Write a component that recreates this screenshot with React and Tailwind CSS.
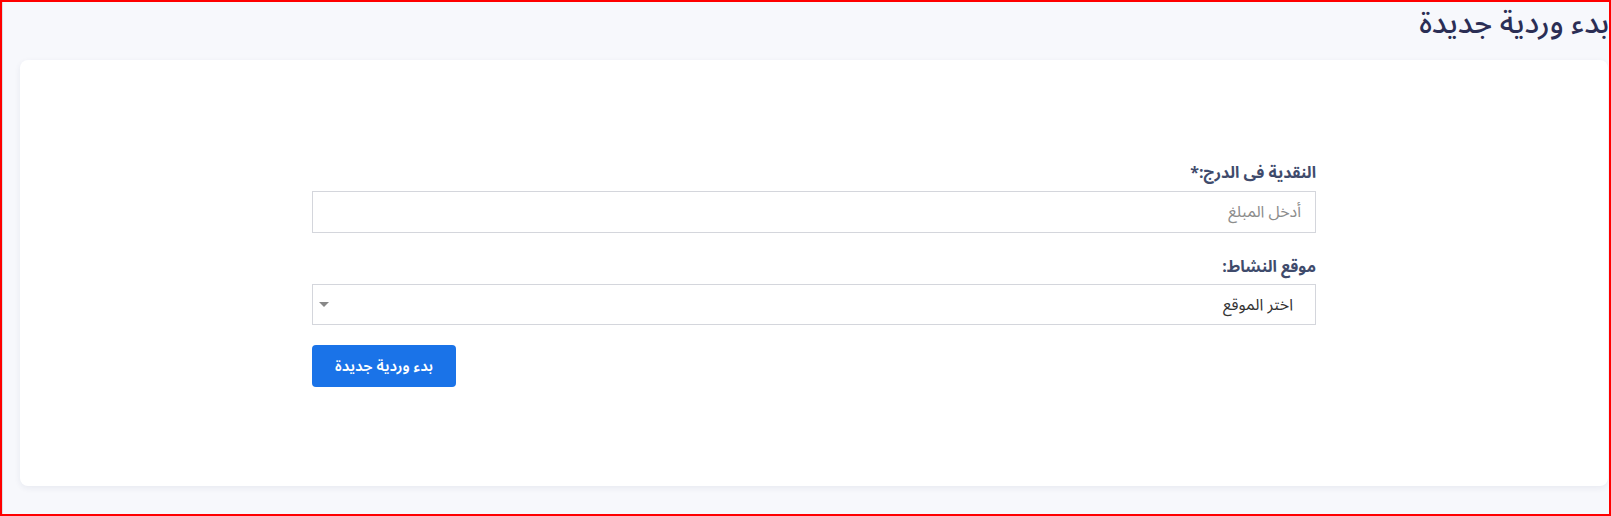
import React from 'react';

function App() {
  return (
    <div
      dir="rtl"
      className="h-[516px] w-[1611px] border-2 border-[#ff0000] bg-[#f7f8fc] overflow-hidden"
      style={{ fontFamily: '"Noto Sans Arabic", "Noto Sans Arabic UI", "Noto Sans", sans-serif' }}
    >
      <div className="h-full border-l border-[#dcdee6] pl-[17px] pr-0">
        {/* Page title */}
        <h1 className="h-[58px] pt-[2px] text-[30px] leading-[40px] font-medium text-[#2b2e55] whitespace-nowrap">
          بدء وردية جديدة
        </h1>

        {/* Card */}
        <div className="h-[426px] mr-[1px] rounded-lg bg-white shadow-[0_2px_6px_rgba(30,40,90,0.07)] pt-[101px]">
          <form className="mx-auto w-[1004px]" onSubmit={e => e.preventDefault()}>
            <label className="block text-[16px] leading-[24px] font-bold text-[#3f4b6c] mb-[6px]">
              النقدية فى الدرج:*
            </label>
            <input
              type="text"
              placeholder="أدخل المبلغ"
              className="block w-full h-[42px] border border-[#d4d6dc] bg-white px-[14px] text-[16px] text-[#333] placeholder:text-[#8c8c8c] outline-none"
            />

            <label className="block mt-[22px] text-[16px] leading-[24px] font-bold text-[#3f4b6c] mb-[5px]">
              موقع النشاط:
            </label>
            <div className="flex items-center justify-between h-[41px] border border-[#d4d6dc] bg-white pr-[22px] pl-[6px]">
              <span className="text-[16px] text-[#333]">اختر الموقع</span>
              <svg width="10" height="6" viewBox="0 0 10 6">
                <path d="M0 0 L10 0 L5 5 Z" fill="#888" />
              </svg>
            </div>

            <div className="flex justify-end mt-[20px]">
              <button
                type="submit"
                className="h-[42px] w-[144px] rounded-[4px] bg-[#1a73e8] text-white text-[15px] font-semibold"
              >
                بدء وردية جديدة
              </button>
            </div>
          </form>
        </div>
      </div>
    </div>
  );
}

export default App;
